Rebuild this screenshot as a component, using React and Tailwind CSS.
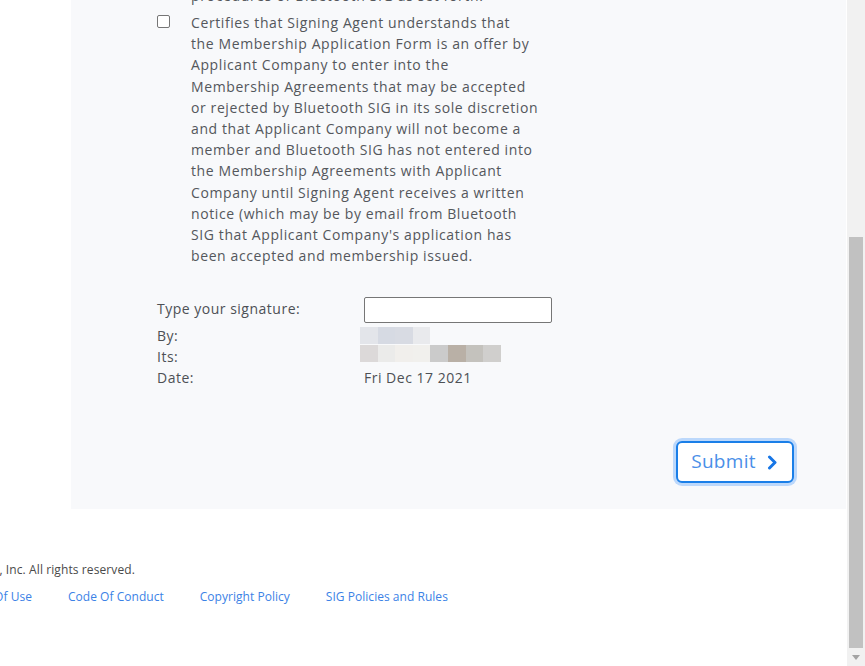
import React from "react";

const font = { fontFamily: '"Open Sans", "Liberation Sans", sans-serif' };

const lines = [
  "Certifies that Signing Agent understands that",
  "the Membership Application Form is an offer by",
  "Applicant Company to enter into the",
  "Membership Agreements that may be accepted",
  "or rejected by Bluetooth SIG in its sole discretion",
  "and that Applicant Company will not become a",
  "member and Bluetooth SIG has not entered into",
  "the Membership Agreements with Applicant",
  "Company until Signing Agent receives a written",
  "notice (which may be by email from Bluetooth",
  "SIG that Applicant Company's application has",
  "been accepted and membership issued.",
];

const byBlocks = ["#e3e5ea", "#d6dae3", "#d8dbe3", "#e9eaed"];
const itsBlocks = ["#dcd9d9", "#ebebea", "#f1efec", "#f1f0ed", "#cbcbcb", "#b9b0a6", "#c4c2bd", "#d0cfcd"];

export default function App() {
  return (
    <div className="flex h-[666px] w-[865px] overflow-hidden bg-white" style={font}>
      <div className="flex w-[847px] flex-col">
        <div className="ml-[71px] w-[775px] bg-[#f8f9fb] pl-[86px] pr-[52px] pb-[26px]">
          <div className="ml-[34px] mt-[-15px] h-[21px] whitespace-nowrap text-[14px] leading-[21px] tracking-[0.65px] text-[#54575c]">
            procedures of Bluetooth SIG as set forth.
          </div>
          <div className="mt-[6px] flex">
            <div className="mt-[3px] h-[13px] w-[13px] shrink-0 rounded-[2px] border border-[#767676] bg-white" />
            <div className="ml-[21px] text-[14px] leading-[21.2px] tracking-[0.6px] text-[#54575c]">
              {lines.map((l) => (
                <div key={l} className="whitespace-nowrap">{l}</div>
              ))}
            </div>
          </div>
          <div className="mt-[31px] flex h-[26px] items-center text-[14px] tracking-[0.5px] text-[#4d5055]">
            <div className="w-[207px] pb-[4px]">Type your signature:</div>
            <div className="h-[26px] w-[188px] rounded-[2px] border border-[#767676] bg-white" />
          </div>
          <div className="mt-[4px] flex text-[14px] tracking-[0.5px] text-[#4d5055]">
            <div className="w-[203px] leading-[18px]">By:</div>
            <div className="flex h-[18px]">
              {byBlocks.map((c, i) => (
                <div key={i} className="h-[17px] w-[17.5px]" style={{ background: c }} />
              ))}
            </div>
          </div>
          <div className="flex text-[14px] tracking-[0.5px] text-[#4d5055]">
            <div className="w-[203px] pt-[3px] leading-[17px]">Its:</div>
            <div className="flex h-[17px]">
              {itsBlocks.map((c, i) => (
                <div key={i} className="h-[17px] w-[17.6px]" style={{ background: c }} />
              ))}
            </div>
          </div>
          <div className="flex text-[14px] leading-[26px] tracking-[0.5px] text-[#4d5055]">
            <div className="w-[207px]">Date:</div>
            <div>Fri Dec 17 2021</div>
          </div>
          <div className="mt-[50px] flex justify-end">
            <button className="flex h-[42px] w-[118px] items-center justify-center gap-[11px] rounded-[6px] border-2 border-[#1a7fe8] bg-white pr-[1px] text-[19px] tracking-[0.3px] text-[#4a8fe8] shadow-[0_0_0_3px_#bcd8fb]">
              <span className="pb-[2px]">Submit</span>
              <svg width="11" height="15" viewBox="0 0 11 15" fill="none">
                <path d="M2.5 2 L8 7.5 L2.5 13" stroke="#1776e6" strokeWidth="3" strokeLinecap="round" strokeLinejoin="round" />
              </svg>
            </button>
          </div>
        </div>
        <div className="mt-[53px] flex h-[16px] items-center text-[12px] tracking-[0.1px] text-[#4a4a4a]">
          <div className="flex w-[135px] justify-end overflow-hidden whitespace-nowrap">
            Copyright © 2021 Bluetooth SIG, Inc. All rights reserved.
          </div>
        </div>
        <div className="mt-[11px] flex h-[16px] items-center gap-[36px] text-[12px] tracking-[0.03px] text-[#3b82e6]">
          <div className="flex w-[32px] justify-end overflow-hidden whitespace-nowrap">Terms Of Use</div>
          <span className="whitespace-nowrap">Code Of Conduct</span>
          <span className="whitespace-nowrap">Copyright Policy</span>
          <span className="whitespace-nowrap">SIG Policies and Rules</span>
        </div>
      </div>
      <div className="relative flex w-[18px] flex-col bg-[#f1f1f1]">
        <div className="h-[237px]" />
        <div className="ml-[2px] h-[411px] w-[14px] bg-[#c1c1c1]" />
        <div className="flex h-[18px] items-center justify-center">
          <svg width="8" height="5" viewBox="0 0 8 5">
            <path d="M0 0 L8 0 L4 5 Z" fill="#a3a3a3" />
          </svg>
        </div>
      </div>
    </div>
  );
}
